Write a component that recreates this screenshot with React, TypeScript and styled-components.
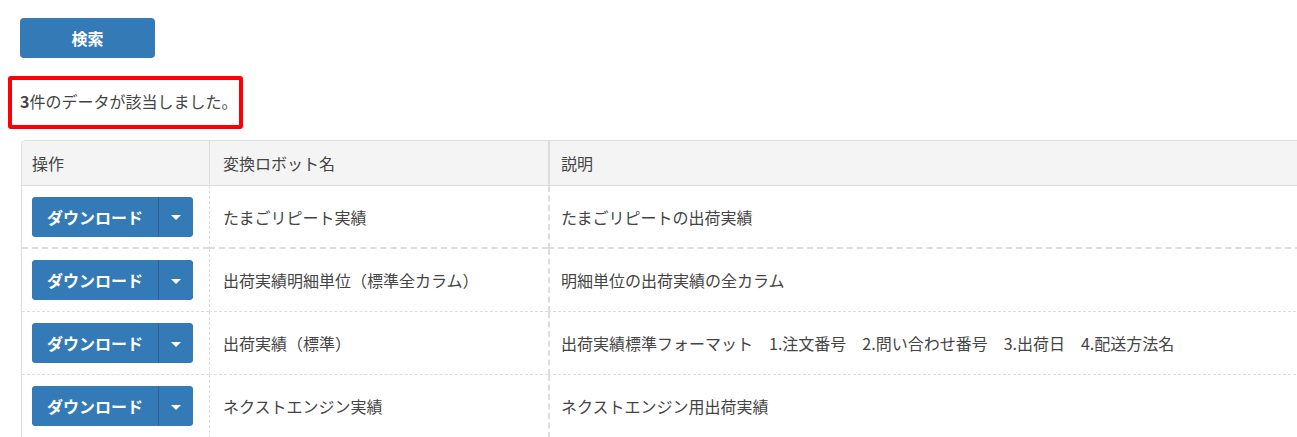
import styled, { createGlobalStyle } from "styled-components";

const GlobalStyle = createGlobalStyle`
  html, body {
    margin: 0;
    padding: 0;
    background: #fff;
    overflow: hidden;
  }
  body {
    font-family: "Noto Sans CJK JP", "Noto Sans", sans-serif;
    color: #444;
    font-size: 16px;
  }
`;

const Page = styled.div`
  padding: 18px 0 0 8px;
`;

const SearchButton = styled.button`
  display: block;
  margin-left: 12px;
  width: 135px;
  height: 40px;
  border: none;
  border-radius: 4px;
  background: #337ab7;
  color: #fff;
  font-family: inherit;
  font-size: 16px;
  font-weight: 700;
  cursor: pointer;
`;

const ResultBox = styled.div`
  margin-top: 18px;
  width: 235px;
  height: 53px;
  box-sizing: border-box;
  border: 4px solid #ff0000;
  border-radius: 3px;
  padding: 0 0 3px 8px;
  display: flex;
  align-items: center;
  font-size: 16px;
  color: #444;
  white-space: nowrap;
`;

const Count = styled.b`
  font-weight: 700;
`;

const TableWrap = styled.div`
  margin: 11px 0 0 13px;
  width: 1300px;
`;

const Table = styled.table`
  width: 100%;
  table-layout: fixed;
  border-collapse: separate;
  border-spacing: 0;
  border-left: 1px solid #ddd;
  border-top: 1px solid #ddd;
  border-top-left-radius: 5px;
  overflow: hidden;
`;

type Edge = "none" | "thin" | "thick";

const padLeft = (e: Edge) => (e === "none" ? "10px" : e === "thin" ? "13px" : "11px");

const HeadCell = styled.th<{ $edge: Edge }>`
  height: 45px;
  box-sizing: border-box;
  padding: 0 12px 0 ${(p) => padLeft(p.$edge)};
  text-align: left;
  font-weight: 400;
  font-size: 16px;
  color: #444;
  background: #f4f4f4;
  border-bottom: 1px solid #ddd;
  border-left: ${(p) =>
    p.$edge === "thick" ? "2px solid #ddd" : p.$edge === "thin" ? "1px solid #ddd" : "none"};
`;

const Cell = styled.td<{ $edge: Edge; $heavyBottom?: boolean }>`
  height: 63px;
  box-sizing: border-box;
  padding: 0 12px 0 ${(p) => padLeft(p.$edge)};
  font-size: 16px;
  color: #444;
  white-space: nowrap;
  vertical-align: middle;
  border-bottom: ${(p) => (p.$heavyBottom ? "2px dashed #ddd" : "1px dashed #ddd")};
  border-left: ${(p) =>
    p.$edge === "thick" ? "2px dashed #ddd" : p.$edge === "thin" ? "1px dashed #ddd" : "none"};
`;

const Split = styled.div`
  display: inline-flex;
  height: 40px;
  border-radius: 4px;
  overflow: hidden;
  background: #337ab7;
  vertical-align: middle;
`;

const MainPart = styled.button`
  width: 126px;
  height: 40px;
  border: none;
  background: #337ab7;
  color: #fff;
  font-family: inherit;
  font-size: 16px;
  font-weight: 700;
  padding: 0;
  cursor: pointer;
`;

const CaretPart = styled.button`
  width: 35px;
  height: 40px;
  border: none;
  border-left: 1px solid #2a6496;
  background: #337ab7;
  display: flex;
  align-items: center;
  justify-content: center;
  padding: 0;
  cursor: pointer;
`;

const Caret = styled.span`
  width: 0;
  height: 0;
  border-left: 5px solid transparent;
  border-right: 5px solid transparent;
  border-top: 5px solid #fff;
  margin-top: 2px;
`;

const rows = [
  { name: "たまごリピート実績", desc: "たまごリピートの出荷実績" },
  { name: "出荷実績明細単位（標準全カラム）", desc: "明細単位の出荷実績の全カラム" },
  {
    name: "出荷実績（標準）",
    desc: "出荷実績標準フォーマット　1.注文番号　2.問い合わせ番号　3.出荷日　4.配送方法名",
  },
  { name: "ネクストエンジン実績", desc: "ネクストエンジン用出荷実績" },
];

export default function App() {
  return (
    <Page>
      <GlobalStyle />
      <SearchButton>検索</SearchButton>
      <ResultBox>
        <Count>3</Count>件のデータが該当しました。
      </ResultBox>
      <TableWrap>
        <Table>
          <colgroup>
            <col style={{ width: 187 }} />
            <col style={{ width: 339 }} />
            <col />
          </colgroup>
          <thead>
            <tr>
              <HeadCell $edge="none">操作</HeadCell>
              <HeadCell $edge="thin">変換ロボット名</HeadCell>
              <HeadCell $edge="thick">説明</HeadCell>
            </tr>
          </thead>
          <tbody>
            {rows.map((r, i) => (
              <tr key={r.name}>
                <Cell $edge="none" $heavyBottom={i === 0}>
                  <Split>
                    <MainPart>ダウンロード</MainPart>
                    <CaretPart>
                      <Caret />
                    </CaretPart>
                  </Split>
                </Cell>
                <Cell $edge="thin" $heavyBottom={i === 0}>
                  {r.name}
                </Cell>
                <Cell $edge="thick" $heavyBottom={i === 0}>
                  {r.desc}
                </Cell>
              </tr>
            ))}
          </tbody>
        </Table>
      </TableWrap>
    </Page>
  );
}
